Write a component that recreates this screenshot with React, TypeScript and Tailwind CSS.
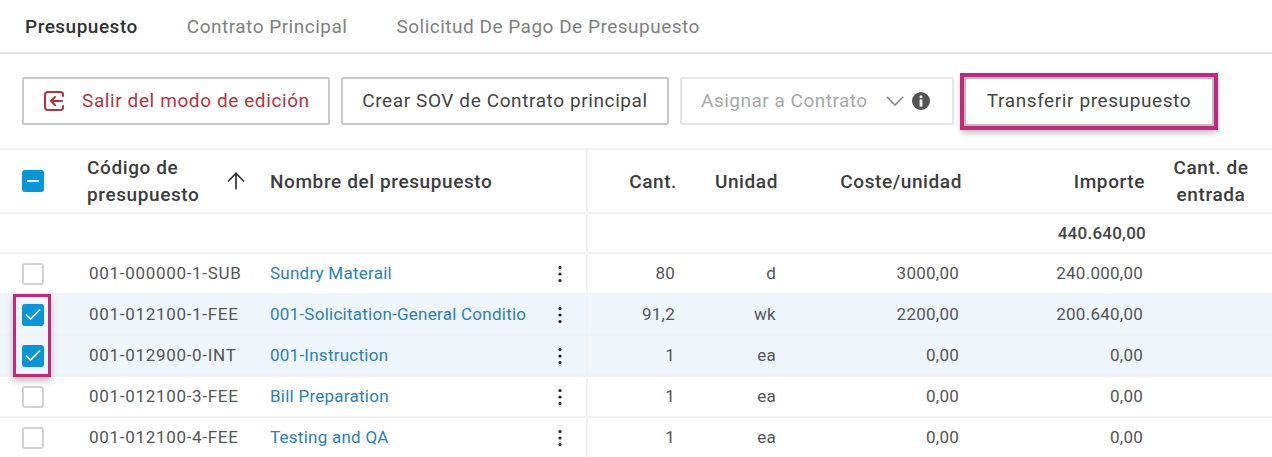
import { ArrowUp, Check, Minus } from "lucide-react";

const gridCols = "grid grid-cols-[66px_203px_319px_100px_102px_182px_185px_115px] items-center";

const rows = [
    { code: "001-000000-1-SUB", name: "Sundry Materail", qty: "80", unit: "d", cost: "3000,00", total: "240.000,00", checked: false },
    { code: "001-012100-1-FEE", name: "001-Solicitation-General Conditio", qty: "91,2", unit: "wk", cost: "2200,00", total: "200.640,00", checked: true },
    { code: "001-012900-0-INT", name: "001-Instruction", qty: "1", unit: "ea", cost: "0,00", total: "0,00", checked: true },
    { code: "001-012100-3-FEE", name: "Bill Preparation", qty: "1", unit: "ea", cost: "0,00", total: "0,00", checked: false },
    { code: "001-012100-4-FEE", name: "Testing and QA", qty: "1", unit: "ea", cost: "0,00", total: "0,00", checked: false },
];

function Dots() {
    return (
        <svg width="4" height="18" viewBox="0 0 4 18" className="text-[#222]" fill="currentColor">
            <circle cx="2" cy="2.5" r="1.6" />
            <circle cx="2" cy="9" r="1.6" />
            <circle cx="2" cy="15.5" r="1.6" />
        </svg>
    );
}

function ExitIcon() {
    return (
        <svg width="22" height="22" viewBox="0 0 22 22" fill="none" stroke="#b8323c" strokeWidth="2" strokeLinecap="round" strokeLinejoin="round">
            <path d="M20 6V4.5A2.5 2.5 0 0 0 17.500 2H5A3 3 0 0 0 2 5v12a3 3 0 0 0 3 3h12.500A2.500 2.500 0 0 0 20 17.500V16" />
            <path d="M19 11H8M12 7l-4 4 4 4" />
        </svg>
    );
}

function InfoIcon() {
    return (
        <svg width="18" height="18" viewBox="0 0 18 18">
            <circle cx="9" cy="9" r="9" fill="#555" />
            <circle cx="9" cy="4.800" r="1.500" fill="#fff" />
            <rect x="7.600" y="7.500" width="2.800" height="7" fill="#fff" />
        </svg>
    );
}

function Chevron() {
    return (
        <svg width="18" height="10" viewBox="0 0 18 10" fill="none" stroke="#808080" strokeWidth="1.500">
            <path d="M1 1l8 8 8-8" />
        </svg>
    );
}

function Checkbox({ checked }: { checked: boolean }) {
    if (checked) {
        return (
            <div className="w-[22px] h-[22px] rounded-[3px] bg-[#0696d7] flex items-center justify-center">
                <Check size={20} strokeWidth={2} className="text-white" />
            </div>
        );
    }
    return <div className="w-[22px] h-[22px] rounded-[3px] bg-white border-2 border-[#d2d2d2]" />;
}

export default function App() {
    return (
        <div className="relative w-[1272px] h-[457px] overflow-hidden bg-white text-[#3c3c3c] font-['Roboto',sans-serif] text-[17px]">
            {/* tabs */}
            <div className="h-[54px] flex items-center gap-[49px] pl-[25px] pt-[2px] border-b-2 border-[#e2e2e2] text-[19px] tracking-[0.5px]">
                <span className="font-medium text-[#333]">Presupuesto</span>
                <span className="text-[#808080]">Contrato Principal</span>
                <span className="text-[#808080]">Solicitud De Pago De Presupuesto</span>
            </div>

            {/* toolbar */}
            <div className="h-[94px] flex items-center pl-[22px] tracking-[0.6px] text-[19px]">
                <button className="w-[308px] h-[48px] flex items-center pl-[19px] gap-[17px] bg-white border-2 border-[#c8c8c8] rounded-[2px] text-[#b8323c]">
                    <ExitIcon />
                    <span>Salir del modo de edición</span>
                </button>
                <button className="ml-[11px] w-[328px] h-[48px] bg-white border-2 border-[#c8c8c8] rounded-[2px] text-[#444]">
                    Crear SOV de Contrato principal
                </button>
                <button className="ml-[11px] w-[274px] h-[48px] flex items-center pl-[19px] bg-white border-2 border-[#e6e6e6] rounded-[2px] text-[#a8a8a8]">
                    <span className="tracking-[0.5px]">Asignar a Contrato</span>
                    <span className="ml-[18px]"><Chevron /></span>
                    <span className="ml-[8px]"><InfoIcon /></span>
                </button>
                <button className="ml-[10px] w-[250px] h-[49px] bg-white border-2 border-[#c0c0c0] text-[#444] outline-[4px] outline-[#c4277b] shadow-[0_4px_6px_3px_rgba(0,0,0,0.25)]">
                    Transferir presupuesto
                </button>
            </div>

            {/* header */}
            <div className={`${gridCols} h-[66px] border-t-2 border-b-2 border-[#f2f2f2] font-medium text-[#3c3c3c] tracking-[0.6px] leading-[27px] text-[19px]`}>
                <div className="pl-[22px]">
                    <div className="w-[22px] h-[22px] rounded-[3px] bg-[#0696d7] flex items-center justify-center">
                        <Minus size={18} strokeWidth={2.500} className="text-white" />
                    </div>
                </div>
                <div className="pl-[21px] flex items-center justify-between pr-[20px]">
                    <span>Código de<br />presupuesto</span>
                    <ArrowUp size={26} strokeWidth={1.600} className="text-[#333]" />
                </div>
                <div className="border-r-2 border-[#f2f2f2] h-full flex items-center pl-[1px]">Nombre del presupuesto</div>
                <div className="text-right pr-[11px]">Cant.</div>
                <div className="text-right pr-[12px]">Unidad</div>
                <div className="text-right pr-[10px]">Coste/unidad</div>
                <div className="text-right pr-[12px]">Importe</div>
                <div className="text-center pr-[7px]">Cant. de<br />entrada</div>
            </div>

            {/* totals */}
            <div className={`${gridCols} h-[40px] border-b-2 border-[#f2f2f2] font-medium text-[17px] text-[#444] tracking-[0.25px]`}>
                <div />
                <div />
                <div className="border-r-2 border-[#f2f2f2] h-full" />
                <div />
                <div />
                <div />
                <div className="text-right pr-[11px] pt-[1px]">440.640,00</div>
                <div />
            </div>

            {/* rows */}
            {rows.map((row) => (
                <div key={row.code} className={`${gridCols} h-[41px] border-b-2 border-[#f2f2f2] text-[17px] tracking-[0.25px] text-[#555] ${row.checked ? "bg-[#eef6fc]" : "bg-white"}`}>
                    <div className="pl-[22px]"><Checkbox checked={row.checked} /></div>
                    <div className="pl-[23px] tracking-[0.7px]">{row.code}</div>
                    <div className="border-r-2 border-[#f2f2f2] h-full flex items-center pl-[1px]">
                        <span className="w-[260px] whitespace-nowrap text-[#2a80b9]">{row.name}</span>
                        <span className="ml-[28px]"><Dots /></span>
                    </div>
                    <div className="text-right pr-[13px]">{row.qty}</div>
                    <div className="text-right pr-[14px]">{row.unit}</div>
                    <div className="text-right pr-[13px]">{row.cost}</div>
                    <div className="text-right pr-[14px]">{row.total}</div>
                    <div />
                </div>
            ))}

            {/* highlight over the two selected checkboxes */}
            <div className="absolute left-[13px] top-[294px] w-[38px] h-[83px] border-[3px] border-[#c4277b] shadow-[0_4px_6px_0_rgba(0,0,0,0.25)]" />
        </div>
    );
}
